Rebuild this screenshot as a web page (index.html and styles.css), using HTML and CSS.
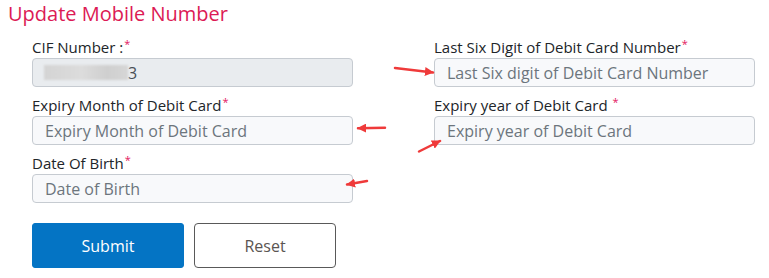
FILE: index.html
```html
<!DOCTYPE html>
<html lang="en">
<head>
<meta charset="utf-8">
<title>Update Mobile Number</title>
<link rel="stylesheet" href="styles.css">
</head>
<body>
<div class="page">
  <h1 class="title">Update Mobile Number</h1>
  <form class="form">
    <div class="grid">
      <div class="field">
        <label class="label">CIF Number :<sup class="req">*</sup></label>
        <div class="control disabled"><span class="redact"></span><span class="digit">3</span></div>
      </div>
      <div class="field">
        <label class="label">Last Six Digit of Debit Card Number<sup class="req">*</sup></label>
        <input class="control" type="text" placeholder="Last Six digit of Debit Card Number">
      </div>
      <div class="field">
        <label class="label">Expiry Month of Debit Card<sup class="req">*</sup></label>
        <input class="control" type="text" placeholder="Expiry Month of Debit Card">
      </div>
      <div class="field">
        <label class="label">Expiry year of Debit Card <sup class="req">*</sup></label>
        <input class="control" type="text" placeholder="Expiry year of Debit Card">
      </div>
      <div class="field">
        <label class="label">Date Of Birth<sup class="req">*</sup></label>
        <input class="control" type="text" placeholder="Date of Birth">
      </div>
    </div>
    <div class="actions">
      <button type="button" class="btn btn-primary">Submit</button>
      <button type="button" class="btn btn-outline">Reset</button>
    </div>
  </form>
  <svg class="annotations" width="769" height="278" viewBox="0 0 769 278">
    <defs>
      <marker id="ah" viewBox="0 0 10 10" refX="9" refY="5" markerWidth="3.6" markerHeight="3.6" orient="auto" markerUnits="strokeWidth">
        <path d="M0,0 L10,5 L0,10 z" fill="#ef3a3a"/>
      </marker>
    </defs>
    <g stroke="#ef3a3a" stroke-width="2.5" stroke-linecap="round" fill="none">
      <line x1="395" y1="68" x2="433" y2="72.5" marker-end="url(#ah)"/>
      <line x1="385" y1="127.8" x2="358" y2="128.2" marker-end="url(#ah)"/>
      <line x1="419" y1="151.5" x2="440" y2="141" marker-end="url(#ah)"/>
      <line x1="367" y1="181" x2="347" y2="184.5" marker-end="url(#ah)"/>
    </g>
  </svg>
</div>
</body>
</html>
```
FILE: styles.css
```css
html, body {
  margin: 0;
  padding: 0;
  background: #ffffff;
}

body {
  font-family: "Open Sans", "Liberation Sans", sans-serif;
  color: #212529;
}

.page {
  position: relative;
  width: 769px;
  height: 278px;
  overflow: hidden;
}

.title {
  margin: 0;
  padding-left: 8px;
  font-size: 20px;
  line-height: 28px;
  font-weight: 400;
  color: #dc1a55;
}

.form {
  padding: 9px 0 0 32px;
}

.grid {
  display: grid;
  grid-template-columns: 321px 321px;
  column-gap: 81px;
  row-gap: 8px;
}

.field {
  display: flex;
  flex-direction: column;
}

.label {
  font-size: 15px;
  line-height: 20px;
  margin-bottom: 1px;
  color: #212529;
}

.req {
  color: #e3175f;
  font-size: 11px;
  line-height: 0;
  vertical-align: 5px;
  margin-left: 1px;
}

.control {
  box-sizing: border-box;
  height: 29px;
  width: 321px;
  margin: 0;
  padding: 0 12px;
  border: 1px solid #c6cbd1;
  border-radius: 4px;
  background: #f8f9fb;
  font-family: "Open Sans", "Liberation Sans", sans-serif;
  font-size: 16px;
  color: #495057;
  outline: none;
}

.control::placeholder {
  color: #6c757d;
  opacity: 1;
}

.disabled {
  display: flex;
  align-items: center;
  background: #e9ecef;
  padding-left: 11px;
}

.redact {
  display: block;
  width: 84px;
  height: 15px;
  background: linear-gradient(90deg, #d4d4d4 0%, #dcdcdc 45%, #cfcfcf 75%, #d6d6d6 100%);
  filter: blur(1px);
}

.digit {
  font-size: 16px;
  color: #495057;
  margin-left: 0;
}

.actions {
  display: flex;
  gap: 10px;
  margin-top: 20px;
}

.btn {
  box-sizing: border-box;
  height: 45px;
  font-family: "Open Sans", "Liberation Sans", sans-serif;
  font-size: 16px;
  cursor: pointer;
  margin: 0;
}

.btn-primary {
  width: 152px;
  background: #0474c4;
  color: #ffffff;
  border: 1px solid #0474c4;
  border-radius: 3px;
}

.btn-outline {
  width: 142px;
  background: #ffffff;
  color: #5a5552;
  border: 1px solid #595959;
  border-radius: 4px;
}

.annotations {
  position: absolute;
  left: 0;
  top: 0;
  pointer-events: none;
}
```
